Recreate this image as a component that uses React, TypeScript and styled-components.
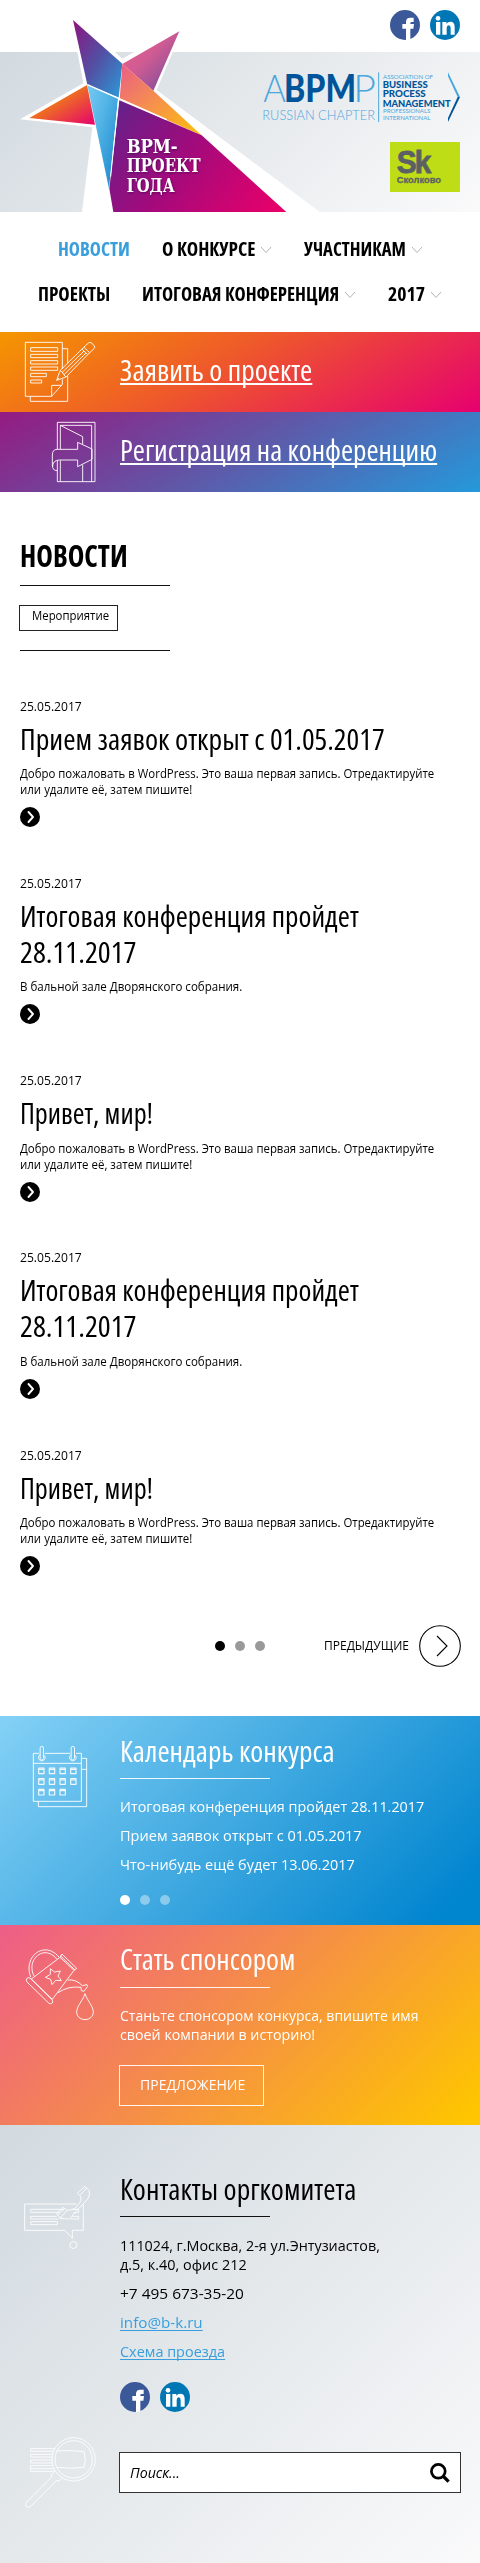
import React, { useLayoutEffect, useRef, useState } from "react";
import styled, { createGlobalStyle } from "styled-components";

const GlobalStyle = createGlobalStyle`
  * { box-sizing: border-box; }
  body {
    margin: 0;
    background: #fff;
    color: #000;
    font-family: "Open Sans", "Noto Sans", sans-serif;
  }
  h1, h2, p, ul { margin: 0; padding: 0; font-weight: 400; }
  ul { list-style: none; }
  a { color: inherit; text-decoration: none; }
  svg { display: block; }
`;

/* ---------- fitted text ---------- */

const FitBox = styled.span<{ $w: number }>`
  display: block;
  flex: none;
  width: ${(p) => p.$w}px;
  white-space: nowrap;
`;

const FitInner = styled.span<{ $underline?: number }>`
  display: inline-block;
  vertical-align: top;
  transform-origin: 0 50%;
  text-decoration: ${(p) => (p.$underline ? "underline" : "none")};
  text-decoration-thickness: ${(p) => p.$underline ?? 1}px;
  text-decoration-skip-ink: none;
  text-underline-offset: 2px;
`;

function Fit({ w, underline, children }: { w: number; underline?: number; children: React.ReactNode }) {
  const ref = useRef<HTMLSpanElement>(null);
  const [scale, setScale] = useState(1);
  useLayoutEffect(() => {
    if (ref.current) setScale(w / ref.current.offsetWidth);
  }, [w]);
  return (
    <FitBox $w={w}>
      <FitInner ref={ref} $underline={underline} style={{ transform: `scaleX(${scale})` }}>
        {children}
      </FitInner>
    </FitBox>
  );
}

/* ---------- header ---------- */

const Page = styled.div`
  width: 480px;
  display: flex;
  flex-direction: column;
`;

const Header = styled.header`
  height: 212px;
  display: flex;
  justify-content: space-between;
  background: linear-gradient(135deg, #d2dae0 0%, #e4e8eb 45%, #fafafb 100%) 0 52px / 100% 160px no-repeat;
`;

const HeaderSide = styled.div`
  width: 197px;
  margin-right: 20px;
  padding-top: 10px;
  display: flex;
  flex-direction: column;
  align-items: flex-end;
`;

const SocialRow = styled.div`
  display: flex;
  gap: 10px;
`;

const AbpmpWrap = styled.a`
  margin: 31px 0 19px;
`;

function Star() {
  return (
    <svg width="263" height="212" viewBox="0 0 789 636" overflow="visible">
      <defs>
        <linearGradient id="s1" x1="0" y1="0" x2="1" y2="1">
          <stop offset="0" stopColor="#8c1480" /><stop offset=".5" stopColor="#534fa3" /><stop offset="1" stopColor="#2a9bd9" />
        </linearGradient>
        <linearGradient id="s2" x1="0" y1="0" x2="1" y2="1">
          <stop offset="0" stopColor="#f0608a" /><stop offset=".45" stopColor="#cf5b93" /><stop offset="1" stopColor="#6b4a9c" />
        </linearGradient>
        <linearGradient id="s3" x1="0" y1="0" x2="1" y2="1">
          <stop offset="0" stopColor="#ea5d86" /><stop offset=".5" stopColor="#f6934a" /><stop offset="1" stopColor="#fdc10a" />
        </linearGradient>
        <linearGradient id="s4" x1="0" y1="0" x2="1" y2="1">
          <stop offset="0" stopColor="#f59505" /><stop offset=".45" stopColor="#ee6a24" /><stop offset="1" stopColor="#e6006e" />
        </linearGradient>
        <linearGradient id="s5" x1="0" y1="0" x2="1" y2="1">
          <stop offset="0" stopColor="#76c9f3" /><stop offset=".4" stopColor="#52b4e6" /><stop offset="1" stopColor="#1482c8" />
        </linearGradient>
        <linearGradient id="s6" gradientUnits="userSpaceOnUse" x1="330" y1="330" x2="800" y2="680">
          <stop offset="0" stopColor="#64218a" /><stop offset=".45" stopColor="#a20a7c" /><stop offset="1" stopColor="#e8006a" />
        </linearGradient>
        <filter id="soft" x="-10%" y="-10%" width="120%" height="130%">
          <feDropShadow dx="2" dy="3" stdDeviation="3" floodColor="#2a0040" floodOpacity=".6" />
        </filter>
      </defs>
      <path fill="#fff" d="M208 30L250 250L60 358L277 382L246 636H960L470 270L555 70L367 176Z" />
      <path fill="url(#s1)" d="M219 60L367 191L356 293L262 254Z" />
      <path fill="url(#s2)" d="M538 94L460 272L367 192Z" />
      <path fill="url(#s3)" d="M367 192L460 272L605 406L359 298Z" />
      <path fill="url(#s4)" d="M261 255L88 354L285 374Z" />
      <path fill="url(#s5)" d="M262 255L354 296L327 566Z" />
      <path fill="url(#s6)" d="M358 301L605 406L859 636H340L328 566Z" />
      <path stroke="#fff" strokeWidth="4" fill="none" d="M262 254L358 296L500 359" />
      <path stroke="#fff" strokeWidth="3" fill="none" d="M356 293L332 530" />
      <g fill="#fff" fontFamily='"DejaVu Serif", "Liberation Serif", serif' fontWeight="700" fontSize="54" filter="url(#soft)">
        <text x="380" y="459" textLength="153" lengthAdjust="spacingAndGlyphs">ВРМ-</text>
        <text x="380" y="517" textLength="222" lengthAdjust="spacingAndGlyphs">ПРОЕКТ</text>
        <text x="380" y="575" textLength="144" lengthAdjust="spacingAndGlyphs">ГОДА</text>
      </g>
    </svg>
  );
}

function Facebook() {
  return (
    <svg width="30" height="30" viewBox="0 0 90 90">
      <circle cx="45" cy="45" r="45" fill="#3b5998" />
      <path fill="#fff" d="M48 91V56H37V42H48V36Q48 23 61 23H71V36H65Q61 36 61 40V42H72L70 56H61V88Q54 91 48 91Z" />
    </svg>
  );
}

function LinkedIn() {
  return (
    <svg width="30" height="30" viewBox="0 0 90 90">
      <circle cx="45" cy="45" r="45" fill="#0077b5" />
      <circle cx="24" cy="25" r="7" fill="#fff" />
      <path fill="#fff" d="M18 36H31V74H18ZM37 36H49V41Q53 35 61 35Q74 35 74 51V74H62V54Q62 46 56 46Q50 46 50 54V74H37Z" />
    </svg>
  );
}

function Social() {
  return (
    <SocialRow>
      <a href="#fb" aria-label="Facebook"><Facebook /></a>
      <a href="#in" aria-label="LinkedIn"><LinkedIn /></a>
    </SocialRow>
  );
}

function Abpmp() {
  const light = "#4ba6dd";
  const dark = "#00549a";
  return (
    <svg width="197" height="52" viewBox="789 212 591 156" overflow="visible" fontFamily="Lato, sans-serif">
      <g fontSize="112">
        <text x="790" y="305" fontWeight="300" fill={light} textLength="68" lengthAdjust="spacingAndGlyphs">A</text>
        <text x="852" y="305" fontWeight="900" fill={dark} textLength="216" lengthAdjust="spacingAndGlyphs">BPM</text>
        <text x="1060" y="305" fontWeight="300" fill={light} textLength="68" lengthAdjust="spacingAndGlyphs">P</text>
      </g>
      <text x="787" y="360" fontSize="42" fontWeight="300" fill={light} textLength="338" lengthAdjust="spacingAndGlyphs">RUSSIAN CHAPTER</text>
      <path d="M1136 216V365" stroke={light} strokeWidth="3" />
      <g fontSize="19" fill={light}>
        <text x="1149" y="236" textLength="150" lengthAdjust="spacingAndGlyphs">ASSOCIATION OF</text>
        <text x="1149" y="339" textLength="142" lengthAdjust="spacingAndGlyphs">PROFESSIONALS</text>
        <text x="1149" y="359" textLength="142" lengthAdjust="spacingAndGlyphs">INTERNATIONAL</text>
      </g>
      <g fontSize="29" fontWeight="900" fill={dark}>
        <text x="1148" y="264" textLength="135" lengthAdjust="spacingAndGlyphs">BUSINESS</text>
        <text x="1148" y="291" textLength="129" lengthAdjust="spacingAndGlyphs">PROCESS</text>
        <text x="1148" y="319" textLength="204" lengthAdjust="spacingAndGlyphs">MANAGEMENT</text>
      </g>
      <path fill={light} d="M1344 216L1380 290H1373L1344 228Z" />
      <path fill={dark} d="M1344 365L1380 290H1373L1344 353Z" />
    </svg>
  );
}

function Skolkovo() {
  return (
    <svg width="70" height="50" viewBox="0 0 210 150" fontFamily='"Liberation Sans", sans-serif' fontWeight="700" fill="#5b6163">
      <rect width="210" height="150" fill="#bedd16" />
      <g fontSize="94" stroke="#5b6163" strokeWidth="2.5">
        <text x="20" y="94" textLength="98" letterSpacing="-6" lengthAdjust="spacingAndGlyphs">Sk</text>
      </g>
      <text x="20" y="123" fontSize="29" stroke="#5b6163" strokeWidth="0.8" textLength="133" lengthAdjust="spacingAndGlyphs">Сколково</text>
    </svg>
  );
}

/* ---------- navigation ---------- */

const Nav = styled.nav`
  height: 120px;
  padding-top: 15px;
  display: flex;
  flex-direction: column;
`;

const NavRow = styled.div`
  height: 45px;
  display: flex;
  justify-content: center;
  align-items: flex-start;
  gap: 32.5px;
`;

const NavLink = styled.a<{ $active?: boolean }>`
  display: flex;
  align-items: center;
  gap: 4.5px;
  height: 44px;
  font-size: 19.5px;
  font-weight: 700;
  font-stretch: 75%;
  line-height: 44px;
  color: ${(p) => (p.$active ? "#389fdc" : "#000")};
  svg { margin-top: 2px; }
`;

const Chevron = () => (
  <svg width="12" height="8" viewBox="0 0 12 8" fill="none" stroke="#b5b5b5">
    <path d="M1 1L6 6.5L11 1" />
  </svg>
);

function NavItem({ label, w, active, menu }: { label: string; w: number; active?: boolean; menu?: boolean }) {
  return (
    <NavLink href="#nav" $active={active}>
      <Fit w={w}>{label}</Fit>
      {menu && <Chevron />}
    </NavLink>
  );
}

/* ---------- banners ---------- */

const Banner = styled.a<{ $bg: string }>`
  height: 80px;
  display: flex;
  background: ${(p) => p.$bg};
  && { color: #fff; }
  font-size: 29px;
  font-stretch: 75%;
  line-height: 76px;
`;

const LineIcon = styled.svg<{ $o?: number }>`
  flex: none;
  fill: none;
  stroke: #fff;
  stroke-width: 3;
  stroke-linejoin: round;
  stroke-opacity: ${(p) => p.$o ?? 0.9};
`;

const DocIcon = () => (
  <LineIcon width="120" height="80" viewBox="0 36 360 240">
    <path d="M187 147V67H76V229H155L187 193V178M155 229V196H185M187 86H203V130M203 168V244H91V229" />
    <path d="M92 83H173V94H92ZM92 103H173V113H92ZM92 122H173V132H92ZM173 151H92V141H173ZM92 160H139V170H92ZM92 180H125V189H92Z" />
    <path d="M170 181L180 152L246 87L265 69Q270 65 275 69L283 78Q286 82 282 86L263 104L198 171ZM180 152L187 156L191 164L198 171M246 87L263 104M252 82L269 98M187 157L252 93M192 164L258 99M170 181L177 174" />
  </LineIcon>
);

const DoorIcon = () => (
  <LineIcon width="120" height="80" viewBox="0 276 360 240">
    <path d="M172 388V307H285V485H172V421M181 388V316H275V485M181 421V485M181 316L248 350V372M248 434V485" />
    <path d="M172 452Q157 452 157 435V405Q157 388 172 388H233V367L276 387V418L233 440V420H178Q157 421 158 441" />
  </LineIcon>
);

/* ---------- news ---------- */

const News = styled.main`
  height: 1224px;
  padding: 48px 20px 0;
`;

const NewsTitle = styled.h1`
  font-size: 29.5px;
  font-weight: 700;
  font-stretch: 75%;
  line-height: 32px;
`;

const Rule = styled.hr<{ $c?: string; $m: string }>`
  width: 150px;
  height: 1px;
  border: 0;
  margin: ${(p) => p.$m};
  background: ${(p) => p.$c ?? "#111"};
`;

const Tag = styled.a`
  display: block;
  width: 99px;
  height: 26px;
  margin-left: -1px;
  padding: 0 0 0 12px;
  border: 1px solid #222;
  font-size: 12.5px;
  line-height: 20px;
`;

const Article = styled.article`
  margin-bottom: 48.75px;
`;

const ArticleDate = styled.div`
  font-size: 12.5px;
  line-height: 16px;
  margin-bottom: 6px;
`;

const ArticleTitle = styled.h2`
  font-size: 29px;
  font-stretch: 75%;
  line-height: 36px;
  margin-bottom: 9.5px;
`;

const ArticleText = styled.p`
  font-size: 12.5px;
  line-height: 16px;
  margin-bottom: 9px;
`;

const MoreIcon = () => (
  <svg width="20" height="20" viewBox="0 0 20 20" fill="none">
    <circle cx="10" cy="10" r="10" fill="#000" />
    <path d="M8.5 5L13 10L8.5 15" stroke="#fff" strokeWidth="1.9" strokeLinecap="round" strokeLinejoin="round" />
  </svg>
);

type Line = [string, number];
const open: Line[] = [["Прием заявок открыт с 01.05.2017", 365]];
const finalConf: Line[] = [["Итоговая конференция пройдет", 339], ["28.11.2017", 117]];
const hello: Line[] = [["Привет, мир!", 133]];
const welcome: Line[] = [
  ["Добро пожаловать в WordPress. Это ваша первая запись. Отредактируйте", 414.5],
  ["или удалите её, затем пишите!", 172.5],
];
const hall: Line[] = [["В бальной зале Дворянского собрания.", 222.5]];
const articles = [
  { title: open, text: welcome },
  { title: finalConf, text: hall },
  { title: hello, text: welcome },
  { title: finalConf, text: hall },
  { title: hello, text: welcome },
];

const Lines = ({ lines }: { lines: Line[] }) => (
  <>
    {lines.map(([t, w]) => (
      <Fit key={t} w={w}>{t}</Fit>
    ))}
  </>
);

const Pager = styled.div`
  display: grid;
  grid-template-columns: 195px 1fr 136px;
  align-items: center;
  height: 42px;
  font-size: 13px;
  line-height: 16px;
`;

const Dots = styled.div<{ $c: string }>`
  grid-column: 2;
  display: flex;
  gap: 10px;
  i {
    width: 10px;
    height: 10px;
    border-radius: 50%;
    background: ${(p) => p.$c};
    opacity: 0.4;
  }
  i:first-child { opacity: 1; }
`;

const DotSet = ({ c }: { c: string }) => (
  <Dots $c={c}><i /><i /><i /></Dots>
);

const Prev = styled.a`
  display: flex;
  align-items: center;
  justify-content: space-between;
  margin-right: -1px;
  > span { padding-bottom: 2px; }
`;

/* ---------- info panels ---------- */

const Panel = styled.section<{ $bg: string; $h: number; $pt: number }>`
  display: flex;
  height: ${(p) => p.$h}px;
  background: ${(p) => p.$bg};
  color: #fff;
  > div { padding-top: ${(p) => p.$pt}px; }
`;

const PanelTitle = styled.h2`
  font-size: 29px;
  font-stretch: 75%;
  line-height: 36px;
`;

const PanelText = styled.div`
  font-size: 15px;
  line-height: 19.4px;
  margin-bottom: 9.7px;
`;

const PanelFoot = styled.div`
  padding-top: 10.4px;
`;

const OfferButton = styled.a`
  display: block;
  width: 145px;
  height: 41px;
  margin: 20.7px 0 0 -1px;
  padding-left: 20px;
  border: 1px solid rgba(255, 255, 255, 0.9);
  font-size: 14.5px;
  line-height: 38px;
`;

const CalendarIcon = () => (
  <LineIcon width="120" height="120" viewBox="0 -12 360 360">
    <path d="M117 100H100V244H244V100H228M134 100H210M100 130H244M244 115H260V260H115V244M244 148H260" />
    {[125.5, 218.5].map((x) => (
      <path key={x} d={`M${x - 5} 115V84a5 5 0 0 1 10 0V115a5 5 0 0 1 -10 0M${x - 5} 104a10 10 0 1 0 10 0`} />
    ))}
    {[0, 1, 2, 3, 4, 5, 6, 7, 8, 9, 10].map((n) => (
      <path key={n} strokeWidth="3.5" d={`M${116 + (n % 4) * 32} ${144 + Math.floor(n / 4) * 32}h16v17h-16zm0 4h16`} />
    ))}
  </LineIcon>
);

const CanIcon = () => (
  <LineIcon width="120" height="120" viewBox="0 615 360 360">
    <path d="M94 777L180 712L222 751L157 838ZM180 712L186 702L230 745L222 751M182 708L225 750" />
    <path d="M90 774Q84 771 80 776Q77 780 81 786L146 849Q152 854 157 849Q160 844 156 839Z" />
    <path d="M92 771C78 735 95 696 130 690Q155 686 177 711M102 768C86 736 102 704 132 698Q155 697 170 717" />
    <path d="M151 746L163 756L181 753L174 768L184 782L167 781L156 794L152 778L136 772L151 763Z" />
    <path d="M203 780Q228 777 247 797L261 794L263 799L252 814L244 812L243 802Q205 797 174 818" />
    <path d="M255 821C248 843 230 858 230 877A25 22 0 0 0 280 877C280 858 262 843 255 821Z" />
  </LineIcon>
);

const Footer = styled.footer`
  height: 438px;
  background: linear-gradient(135deg, #d2dae0 0%, #e5e9ec 50%, #fafafb 100%);
`;

const FooterRow = styled.div<{ $h: number; $pt: number }>`
  display: flex;
  height: ${(p) => p.$h}px;
  > div { padding-top: ${(p) => p.$pt}px; }
`;

const FooterLink = styled.a`
  && { color: #389fdc; }
`;

const PhoneIcon = () => (
  <LineIcon width="120" height="140" viewBox="0 -105 360 420" $o={0.85}>
    <path d="M230 132H74V211H195L217 235V211H250V133" />
    <circle cx="220" cy="255" r="10.5" />
    <path d="M177 157H92V148H192M214 148H236V158H220M170 169H92V177H176M212 177H236V169H217M92 185H172V194H92Z" />
    <path d="M232 100L254 79L260 84L239 107ZM260 84L268 92Q272 112 252 129L222 160Q212 178 203 177L180 175L201 151M239 107L243 111Q244 122 238 130L224 146Q215 151 201 151L189 142L170 161L180 174M174 164L193 146" />
  </LineIcon>
);

const LensIcon = () => (
  <LineIcon width="120" height="80" viewBox="0 816 360 240" $o={0.85}>
    <circle cx="221" cy="898" r="65" />
    <circle cx="221" cy="898" r="56" />
    <path d="M164 866H92V874H160M158 883H92V891H156M156 900H92V909H157M158 917H92V926H162M164 934H92V926" />
    <path d="M170 873Q212 869 252 875Q260 898 252 922Q210 927 170 922" />
    <path d="M163 936L154 944V952L79 1027Q74 1034 79 1040Q85 1045 91 1040L168 963L180 961L186 955" />
  </LineIcon>
);

const SearchBox = styled.label`
  display: flex;
  align-items: center;
  justify-content: space-between;
  width: 342px;
  height: 41px;
  margin-left: -1px;
  padding: 0 10px;
  border: 1px solid #333;
  background: #fff;
  font-size: 14.5px;
  font-style: italic;
  line-height: 38px;
`;

export default function App() {
  return (
    <Page>
      <GlobalStyle />
      <Header>
        <Star />
        <HeaderSide>
          <Social />
          <AbpmpWrap href="#abpmp"><Abpmp /></AbpmpWrap>
          <Skolkovo />
        </HeaderSide>
      </Header>
      <Nav>
        <NavRow>
          <NavItem label="НОВОСТИ" w={72} active />
          <NavItem label="О КОНКУРСЕ" w={93} menu />
          <NavItem label="УЧАСТНИКАМ" w={102} menu />
        </NavRow>
        <NavRow>
          <NavItem label="ПРОЕКТЫ" w={72} />
          <NavItem label="ИТОГОВАЯ КОНФЕРЕНЦИЯ" w={197} menu />
          <NavItem label="2017" w={37.5} menu />
        </NavRow>
      </Nav>
      <Banner href="#apply" $bg="linear-gradient(150deg, #f59600 0%, #ee582b 45%, #e6006f 100%)">
        <DocIcon />
        <Fit w={192.5} underline={1.5}>Заявить о проекте</Fit>
      </Banner>
      <Banner href="#register" $bg="linear-gradient(150deg, #951b81 0%, #5f58a8 50%, #2499da 100%)">
        <DoorIcon />
        <Fit w={317} underline={1.5}>Регистрация на конференцию</Fit>
      </Banner>

      <News>
        <NewsTitle><Fit w={107.5}>НОВОСТИ</Fit></NewsTitle>
        <Rule $m="13px 0 19px" />
        <Tag href="#event"><Fit w={77.5}>Мероприятие</Fit></Tag>
        <Rule $m="19px 0 47.5px" />
        {articles.map((a, i) => (
          <Article key={i}>
            <ArticleDate><Fit w={62}>25.05.2017</Fit></ArticleDate>
            <ArticleTitle><Lines lines={a.title} /></ArticleTitle>
            <ArticleText><Lines lines={a.text} /></ArticleText>
            <MoreIcon />
          </Article>
        ))}
        <Pager>
          <DotSet c="#000" />
          <Prev href="#prev">
            <Fit w={85}>ПРЕДЫДУЩИЕ</Fit>
            <svg width="42" height="42" viewBox="0 0 42 42" fill="none" stroke="#000" strokeWidth="1.1">
              <circle cx="21" cy="21" r="20.3" />
              <path d="M18 11L28 21L18 31" />
            </svg>
          </Prev>
        </Pager>
      </News>

      <Panel $h={209} $pt={17} $bg="linear-gradient(135deg, #84d1f6 0%, #45ace2 45%, #0085cf 93%)">
        <CalendarIcon />
        <div>
          <PanelTitle><Fit w={215}>Календарь конкурса</Fit></PanelTitle>
          <Rule $c="rgba(255,255,255,.9)" $m="9px 0 18px" />
          <PanelText><Fit w={304}>Итоговая конференция пройдет 28.11.2017</Fit></PanelText>
          <PanelText><Fit w={241.5}>Прием заявок открыт с 01.05.2017</Fit></PanelText>
          <PanelText><Fit w={234.5}>Что-нибудь ещё будет 13.06.2017</Fit></PanelText>
          <PanelFoot><DotSet c="#fff" /></PanelFoot>
        </div>
      </Panel>

      <Panel $h={200} $pt={16} $bg="linear-gradient(135deg, #ee5d88 0%, #f4884f 42%, #fec500 97%)">
        <CanIcon />
        <div>
          <PanelTitle><Fit w={175}>Стать спонсором</Fit></PanelTitle>
          <Rule $c="rgba(255,255,255,.9)" $m="10px 0 17.8px" />
          <PanelText>
            <Lines lines={[["Станьте спонсором конкурса, впишите имя", 298], ["своей компании в историю!", 195]]} />
          </PanelText>
          <OfferButton href="#offer"><Fit w={105.5}>ПРЕДЛОЖЕНИЕ</Fit></OfferButton>
        </div>
      </Panel>

      <Footer>
        <FooterRow $h={307} $pt={46}>
          <PhoneIcon />
          <div>
            <PanelTitle><Fit w={236}>Контакты оргкомитета</Fit></PanelTitle>
            <Rule $m="9px 0 18.8px" />
            <PanelText>
              <Lines lines={[["111024, г.Москва, 2-я ул.Энтузиастов,", 260], ["д.5, к.40, офис 212", 127]]} />
            </PanelText>
            <PanelText><Fit w={123.5}>+7 495 673-35-20</Fit></PanelText>
            <PanelText><FooterLink href="#mail"><Fit w={83} underline={1}>info@b-k.ru</Fit></FooterLink></PanelText>
            <PanelText><FooterLink href="#map"><Fit w={105} underline={1}>Схема проезда</Fit></FooterLink></PanelText>
            <PanelFoot><Social /></PanelFoot>
          </div>
        </FooterRow>
        <FooterRow $h={80} $pt={20}>
          <LensIcon />
          <div>
            <SearchBox>
              <Fit w={50}>Поиск...</Fit>
              <svg width="20" height="20" viewBox="0 0 20 20" fill="none" stroke="#000">
                <circle cx="8.3" cy="8.3" r="6.9" strokeWidth="2.7" />
                <path d="M13 13L18.6 18.6" strokeWidth="3.2" />
              </svg>
            </SearchBox>
          </div>
        </FooterRow>
      </Footer>
    </Page>
  );
}
